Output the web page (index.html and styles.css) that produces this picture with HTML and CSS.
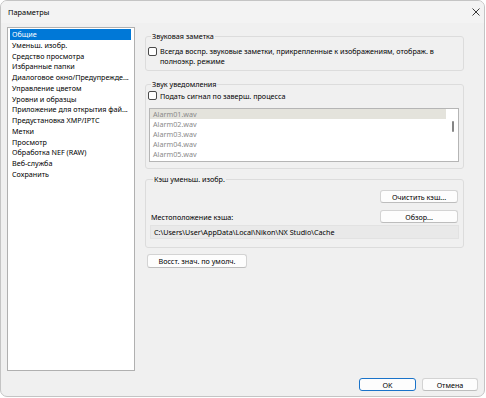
FILE: index.html
```html
<!DOCTYPE html>
<html lang="ru">
<head>
    <meta charset="UTF-8">
    <meta name="viewport" content="width=device-width, initial-scale=1.0">
    <title>Параметры</title>
    <link rel="stylesheet" href="styles.css">
</head>
<body>
    <div class="window">
        <div class="titlebar">
            <span class="title">Параметры</span>
            <svg class="close" width="8" height="8" viewBox="0 0 8 8">
                <path d="M0.5 0.5 L7.5 7.5 M7.5 0.5 L0.5 7.5" stroke="#222" stroke-width="0.9" fill="none"/>
            </svg>
        </div>
        <div class="content">
            <div class="main">
                <ul class="nav">
                    <li class="selected">Общие</li>
                    <li>Уменьш. изобр.</li>
                    <li>Средство просмотра</li>
                    <li>Избранные папки</li>
                    <li>Диалоговое окно/Предупрежде...</li>
                    <li>Управление цветом</li>
                    <li>Уровни и образцы</li>
                    <li>Приложение для открытия фай...</li>
                    <li>Предустановка XMP/IPTC</li>
                    <li>Метки</li>
                    <li>Просмотр</li>
                    <li>Обработка NEF (RAW)</li>
                    <li>Веб-служба</li>
                    <li>Сохранить</li>
                </ul>
                <div class="panel">
                    <fieldset class="group group-note">
                        <legend>Звуковая заметка</legend>
                        <label class="check">
                            <input type="checkbox">
                            <span>Всегда воспр. звуковые заметки, прикрепленные к изображениям, отображ. в<br>полноэкр. режиме</span>
                        </label>
                    </fieldset>
                    <fieldset class="group group-alert">
                        <legend>Звук уведомления</legend>
                        <label class="check">
                            <input type="checkbox">
                            <span>Подать сигнал по заверш. процесса</span>
                        </label>
                        <div class="sound-list">
                            <div class="sound selected">Alarm01.wav</div>
                            <div class="sound">Alarm02.wav</div>
                            <div class="sound">Alarm03.wav</div>
                            <div class="sound">Alarm04.wav</div>
                            <div class="sound">Alarm05.wav</div>
                            <div class="scroll-thumb"></div>
                        </div>
                    </fieldset>
                    <fieldset class="group group-cache">
                        <legend>Кэш уменьш. изобр.</legend>
                        <div class="row row-end">
                            <button class="btn btn-cache">Очистить кэш...</button>
                        </div>
                        <div class="row row-browse">
                            <span>Местоположение кэша:</span>
                            <button class="btn btn-cache">Обзор...</button>
                        </div>
                        <div class="path">C:\Users\User\AppData\Local\Nikon\NX Studio\Cache</div>
                    </fieldset>
                    <button class="btn btn-restore">Восст. знач. по умолч.</button>
                </div>
            </div>
            <div class="footer">
                <button class="btn btn-footer btn-default">OK</button>
                <button class="btn btn-footer">Отмена</button>
            </div>
        </div>
    </div>
</body>
</html>
```

FILE: styles.css
```css
body {
    margin: 0;
    background: #ffffff;
}
.window {
    box-sizing: border-box;
    width: 485px;
    height: 397px;
    border: 1px solid #c4c4c4;
    border-radius: 7px;
    background: #f0f0f0;
    overflow: hidden;
    font-family: 'Noto Sans', sans-serif;
    font-size: 7.2px;
    color: #000000;
}
.titlebar {
    height: 22px;
    display: flex;
    align-items: center;
    justify-content: space-between;
    padding: 0 4px 0 7px;
    background: #f3f3f3;
}
.title {
    font-size: 7.4px;
}
.close {
    display: block;
}
.content {
    padding: 4px 6px 0 6px;
}
.main {
    display: flex;
    height: 344px;
}
.nav {
    box-sizing: border-box;
    width: 128px;
    height: 344px;
    margin: 0;
    padding: 1px 3px 0 2px;
    list-style: none;
    background: #ffffff;
    border: 1px solid #b0b0b0;
}
.nav li {
    line-height: 10.75px;
    padding-left: 2px;
    white-space: nowrap;
    overflow: hidden;
}
.nav li.selected {
    background: #0078d7;
    color: #ffffff;
}
.panel {
    width: 319px;
    margin-left: 10px;
    display: flex;
    flex-direction: column;
    align-items: flex-start;
}
.group {
    box-sizing: border-box;
    width: 100%;
    min-width: 0;
    margin: 0;
    border: 1px solid #dcdcdc;
    border-radius: 3px;
}
.group legend {
    margin-left: 3px;
    padding: 0 1px;
    line-height: 10px;
}
.group-note {
    margin-top: 4px;
    padding: 6px 2px 4px 2px;
}
.group-alert {
    margin-top: 8px;
    padding: 2px 4px 6px 2px;
}
.group-cache {
    margin-top: 5px;
    padding: 6px 4px 8px 4px;
}
.check {
    display: flex;
    align-items: flex-start;
    gap: 3px;
    line-height: 9.5px;
    white-space: nowrap;
}
.check input {
    appearance: none;
    box-sizing: border-box;
    width: 9px;
    height: 9px;
    margin: 0;
    flex: none;
    border: 1px solid #4a4a4a;
    border-radius: 2px;
    background: #ffffff;
}
.group-alert .check {
    line-height: 10px;
}
.sound-list {
    position: relative;
    box-sizing: border-box;
    height: 54px;
    margin: 7px 0 0 1px;
    padding-right: 12px;
    background: #ffffff;
    border: 1px solid #b5b5b5;
}
.sound {
    line-height: 10px;
    padding-left: 3px;
    color: #8a8a8a;
}
.sound.selected {
    background: #e4e3dc;
}
.scroll-thumb {
    position: absolute;
    left: 302px;
    top: 12px;
    width: 2px;
    height: 11px;
    border-radius: 1px;
    background: #858585;
}
.row {
    display: flex;
    align-items: center;
}
.row-end {
    justify-content: flex-end;
}
.row-browse {
    justify-content: space-between;
    margin-top: 7px;
    padding-left: 1px;
}
.btn {
    box-sizing: border-box;
    height: 13px;
    padding: 0;
    font-family: inherit;
    font-size: 7.2px;
    color: #000000;
    background: #fdfdfd;
    border: 1px solid #d3d3d3;
    border-bottom-color: #bdbdbd;
    border-radius: 3px;
}
.btn-cache {
    width: 78px;
    margin-right: 1px;
}
.path {
    box-sizing: border-box;
    height: 14px;
    margin-top: 2px;
    padding-left: 3px;
    line-height: 12px;
    background: #e9e9e9;
    border: 1px solid #e2e2e2;
}
.btn-restore {
    width: 100px;
    height: 14px;
    margin: 6px 0 0 2px;
}
.footer {
    display: flex;
    justify-content: flex-end;
    gap: 6px;
    margin-top: 7px;
}
.btn-footer {
    width: 56px;
}
.btn-default {
    width: 57px;
    border: 1px solid #1a73c9;
}
```
